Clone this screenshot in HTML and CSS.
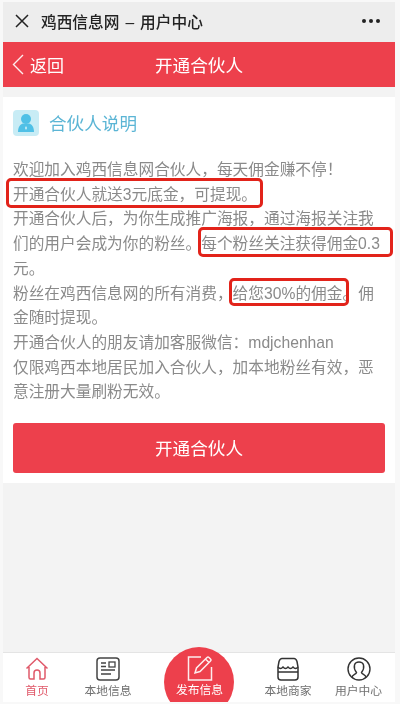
FILE: index.html
```html
<!DOCTYPE html>
<html lang="zh">
<head>
<meta charset="utf-8">
<title>开通合伙人</title>
<link rel="stylesheet" href="styles.css">
</head>
<body>
<div class="screen">
  <header class="wx-bar">
    <svg class="wx-close" width="14" height="14" viewBox="0 0 14 14"><path d="M1 1l12 12M13 1L1 13" stroke="#222" stroke-width="1.5" fill="none"/></svg>
    <span class="wx-title">鸡西信息网 – 用户中心</span>
    <span class="wx-more"><i></i><i></i><i></i></span>
  </header>
  <nav class="red-bar">
    <a class="back">
      <svg width="12" height="21" viewBox="0 0 12 21"><path d="M11 1L1.5 10.5 11 20" stroke="#fff" stroke-width="1.4" fill="none" opacity=".9"/></svg>
      <span>返回</span>
    </a>
    <span class="red-title">开通合伙人</span>
  </nav>
  <main class="card">
    <div class="heading">
      <span class="heading-icon">
        <svg width="18" height="20" viewBox="0 0 18 20"><circle cx="9" cy="6" r="5" fill="#4fc0e6"/><path d="M1 19c0-6 3-8 5-8.500h6c2 .5 5 2.500 5 8.500z" fill="#4fc0e6"/><path d="M9 13l1 2-1 2-1-2z" fill="#d5f1f8"/></svg>
      </span>
      <span class="heading-text">合伙人说明</span>
    </div>
    <p class="intro">欢迎加入鸡西信息网合伙人，每天佣金赚不停！<br>开通合伙人就送3元底金，可提现。<br>开通合伙人后，为你生成推广海报，通过海报关注我们的用户会成为你的粉丝。每个粉丝关注获得佣金0.3元。<br>粉丝在鸡西信息网的所有消费，给您30%的佣金。佣金随时提现。<br>开通合伙人的朋友请加客服微信：mdjchenhan<br>仅限鸡西本地居民加入合伙人，加本地粉丝有效，恶意注册大量刷粉无效。</p>
    <button class="open-btn">开通合伙人</button>
  </main>
  <footer class="tabs">
    <a class="tab tab-active">
      <svg width="24" height="23" viewBox="0 0 24 23"><path d="M1.500 11.500L12 1.500l10.500 10M4 10v10.500q0 1.500 1.500 1.500h3.500v-6q0-3 3-3t3 3v6h3.500q1.500 0 1.500-1.500V10" stroke="#e0596a" stroke-width="1.500" fill="none"/></svg>
      <span>首页</span>
    </a>
    <a class="tab">
      <svg width="24" height="24" viewBox="0 0 24 24"><rect x="1" y="1" width="22" height="22" rx="3" stroke="#444" stroke-width="1.500" fill="none"/><path d="M5 6h5M5 9.500h5M5 13h14M5 17h10" stroke="#444" stroke-width="1.300"/><rect x="13" y="5" width="6" height="5" stroke="#444" stroke-width="1.300" fill="none"/></svg>
      <span>本地信息</span>
    </a>
    <a class="tab tab-publish">
      <span class="bump"></span>
      <svg width="26" height="26" viewBox="0 0 26 26"><path d="M14 2H1.500v23h23V12" stroke="#fff" stroke-width="1.500" fill="none" opacity=".9"/><path d="M8 18l1.500-5L20 2.500q1-1 2 0l1.500 1.500q1 1 0 2L13 16.500zM18.500 4l3.500 3.500" stroke="#fff" stroke-width="1.500" fill="none" opacity=".9"/></svg>
      <span>发布信息</span>
    </a>
    <a class="tab">
      <svg width="24" height="24" viewBox="0 0 24 24"><path d="M6 1.500h12q2 0 3 3l1 5.500v10q0 3-3 3H5q-3 0-3-3V10l1-5.500q1-3 3-3z" stroke="#333" stroke-width="1.500" fill="none"/><path d="M2 10q2.500 3 5 0 2.500 3 5 0 2.500 3 5 0 2.500 3 5 0M2 15h20" stroke="#333" stroke-width="1.400" fill="none"/></svg>
      <span>本地商家</span>
    </a>
    <a class="tab">
      <svg width="24" height="24" viewBox="0 0 24 24"><circle cx="12" cy="12" r="11" stroke="#333" stroke-width="1.400" fill="none"/><path d="M5 20.500c0-3 4-3 4.500-5C7.500 13 7 10 7.500 8c1-4 8-4 9 0 .5 2 0 5-2 7.500.5 2 4.500 2 4.500 5" stroke="#333" stroke-width="1.400" fill="none"/></svg>
      <span>用户中心</span>
    </a>
  </footer>
  <span class="mark mark-a"></span>
  <span class="mark mark-b"></span>
  <span class="mark mark-c"></span>
</div>
</body>
</html>
```
FILE: styles.css
```css
* { box-sizing: border-box; }
html, body { margin: 0; height: 100%; }
body {
  background: #f8f8f8;
  padding: 2px 5px 2px 3px;
  font-family: "Liberation Sans", "Noto Sans CJK SC", sans-serif;
  overflow: hidden;
}
.screen {
  position: relative;
  height: 700px;
  background: #f3f3f3;
  display: flex;
  flex-direction: column;
  filter: blur(0.4px);
}
.wx-bar {
  height: 40px;
  background: #ededed;
  display: flex;
  align-items: center;
  padding: 0 15px 2px 12px;
  flex: none;
}
.wx-close { margin-right: 12px; }
.wx-title { font-size: 15.7px; font-weight: 500; color: #222; flex: 1; word-spacing: 1.6px; }
.wx-more { display: flex; gap: 3px; }
.wx-more i { width: 4px; height: 4px; border-radius: 50%; background: #222; }
.red-bar {
  height: 45px;
  background: #ed404c;
  position: relative;
  display: flex;
  align-items: center;
  justify-content: center;
  flex: none;
  color: #fff;
}
.back {
  position: absolute;
  left: 9px;
  top: 0;
  bottom: 0;
  display: flex;
  align-items: center;
  gap: 6px;
  font-size: 17px;
}
.red-title { font-size: 17.6px; }
.card {
  margin-top: 10px;
  background: #fff;
  height: 386px;
  padding: 13px 10px 0;
  flex: none;
}
.heading {
  display: flex;
  align-items: center;
  gap: 10px;
  font-size: 17.6px;
  color: #5bb5d5;
  height: 26px;
}
.heading-text { margin-top: -2px; }
.heading-icon {
  width: 26px;
  height: 26px;
  border-radius: 4px;
  background: #c8ecf5;
  display: flex;
  align-items: center;
  justify-content: center;
}
.intro {
  margin: 22px 0 0;
  font-size: 15.7px;
  line-height: 24.7px;
  color: #8a8a8a;
}
.open-btn {
  display: block;
  width: 100%;
  height: 50px;
  margin-top: 18px;
  padding: 0 0 2px;
  border: 0;
  border-radius: 3px;
  background: #ed404c;
  color: #fff;
  font: inherit;
  font-size: 17.6px;
}
.tabs {
  margin-top: auto;
  height: 50px;
  background: #fff;
  border-top: 1px solid #e4e4e4;
  display: grid;
  grid-template-columns: 68px 74px 109px 68px 73px;
  flex: none;
}
.tab {
  position: relative;
  display: flex;
  flex-direction: column;
  align-items: center;
  font-size: 11.8px;
  color: #707070;
  padding-top: 4px;
  gap: 3px;
  line-height: 14px;
}
.tab svg, .tab span { position: relative; }
.tab-active { color: #e0596a; }
.tab-active span { margin-top: 1px; }
.tab-publish { color: #fff; padding-top: 2px; gap: 2px; }
.bump {
  position: absolute !important;
  left: 19px;
  top: -6px;
  width: 70px;
  height: 55px;
  background: #ed404c;
  clip-path: circle(35px at 35px 35px);
}
.mark {
  position: absolute;
  border: 3px solid #e2231a;
  border-radius: 5px;
}
.mark-a { left: 3px; top: 176px; width: 257px; height: 30px; }
.mark-b { left: 195px; top: 225px; width: 195px; height: 30px; }
.mark-c { left: 226px; top: 276px; width: 120px; height: 28px; }
```
